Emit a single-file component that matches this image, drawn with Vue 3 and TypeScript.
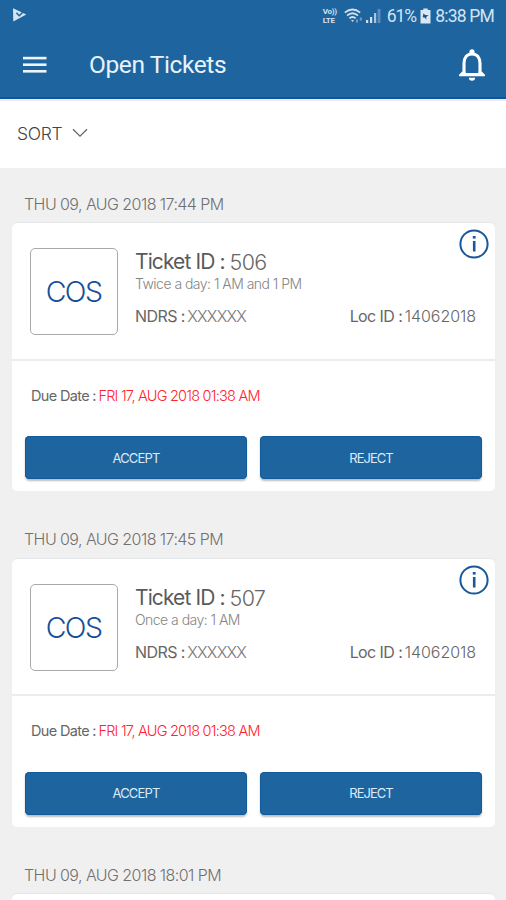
<script setup lang="ts">
interface Ticket {
  id: string
  note: string
  due: string
}

interface Entry {
  created: string
  ticket?: Ticket
}

const entries: Entry[] = [
  {
    created: 'THU 09, AUG 2018 17:44 PM',
    ticket: { id: '506', note: 'Twice a day: 1 AM and 1 PM', due: 'FRI 17, AUG 2018 01:38 AM' },
  },
  {
    created: 'THU 09, AUG 2018 17:45 PM',
    ticket: { id: '507', note: 'Once a day: 1 AM', due: 'FRI 17, AUG 2018 01:38 AM' },
  },
  { created: 'THU 09, AUG 2018 18:01 PM' },
]
</script>

<template>
  <div class="screen">
    <header class="top">
      <div class="status">
        <svg class="play" width="15" height="16" viewBox="0 0 15 16">
          <path d="M1 1.2 L14.3 7.4 L1.3 14.6 Z" fill="#d3e4f3" />
          <path d="M4.4 5.8 L7.2 8.8 L13 3.2" fill="none" stroke="#1e659f" stroke-width="1.5" />
        </svg>
        <div class="status-right">
          <span class="volte"><span>Vo))</span><span>LTE</span></span>
          <svg class="wifi" width="21" height="17" viewBox="0 0 21 17" fill="none" stroke="#cfe0f0" stroke-width="1.8">
            <path d="M0.8 4.6 Q8.5 -1.5 16.2 4.6" />
            <path d="M3 7.6 Q8.5 3 14 7.6" />
            <path d="M5.4 10.4 Q8.5 7.6 11.6 10.4" />
            <path d="M7 12 L8.5 14 L10 12 Z" fill="#cfe0f0" stroke="none" />
            <path d="M13 11.5 v3 M16.8 9.5 v3" stroke="#6f9dc8" stroke-width="2" />
          </svg>
          <svg class="signal" width="15" height="16" viewBox="0 0 15 16">
            <rect x="0" y="12" width="2.2" height="3" fill="#cfe0f0" />
            <rect x="4" y="9" width="2.2" height="6" fill="#cfe0f0" />
            <rect x="8" y="5" width="2.2" height="10" fill="#a9c6e0" />
            <rect x="11.6" y="1" width="2.8" height="14" fill="#5c8fbe" />
          </svg>
          <span class="pct">61%</span>
          <svg class="battery" width="11" height="16" viewBox="0 0 11 16">
            <path d="M3.3 0.5 H7.7 V2 H10.5 V15.5 H0.5 V2 H3.3 Z" fill="#d9e7f4" />
            <path d="M3.6 5.2 L5 7 L8.6 7.2 L6.2 9 L6.4 11.5 L4.6 9.6 L2.6 9.2 Z" fill="#1d4f7c" />
          </svg>
          <span class="clock">8:38 PM</span>
        </div>
      </div>
      <div class="bar">
        <svg class="menu" width="24" height="18" viewBox="0 0 24 18" fill="#eef5fc">
          <rect x="0" y="0.8" width="23.5" height="2.6" />
          <rect x="0" y="7.4" width="23.5" height="2.6" />
          <rect x="0" y="14" width="23.5" height="2.6" />
        </svg>
        <h1>Open Tickets</h1>
        <svg class="bell" width="28" height="32" viewBox="0 0 28 32">
          <path d="M6 25 V14.5 C6 8.6 9 5 14 5 C19 5 22 8.6 22 14.5 V25" fill="none" stroke="#fff" stroke-width="3.1" />
          <path d="M11.4 5 V2.9 A2.6 2.6 0 0 1 16.6 2.9 V5 Z" fill="#fff" />
          <path d="M1 27.2 V25.7 L4.5 22.2 H7.5 V24 H20.5 V22.2 H23.5 L27 25.7 V27.2 Z" fill="#fff" />
          <path d="M10.9 28.7 H17.1 A3.1 3 0 0 1 10.9 28.7 Z" fill="#fff" />
        </svg>
      </div>
    </header>

    <div class="sort">
      <span>SORT</span>
      <svg width="16" height="10" viewBox="0 0 16 10">
        <path d="M1 1.3 L8 8.2 L15 1.3" fill="none" stroke="#666" stroke-width="1.3" />
      </svg>
    </div>

    <main>
      <section v-for="e in entries" :key="e.created" class="group">
        <div class="created">{{ e.created }}</div>
        <article class="card">
          <template v-if="e.ticket">
            <div class="summary">
              <div class="tag">COS</div>
              <div class="details">
                <div class="title"><b>Ticket ID :</b><span>{{ e.ticket.id }}</span></div>
                <div class="note">{{ e.ticket.note }}</div>
                <div class="meta">
                  <div class="pair"><b>NDRS :</b><span class="ndrs">XXXXXX</span></div>
                  <div class="pair"><b>Loc ID :</b><span class="loc">14062018</span></div>
                </div>
              </div>
              <svg class="info" width="30" height="30" viewBox="0 0 30 30">
                <circle cx="15" cy="15" r="13.6" fill="none" stroke="#19569a" stroke-width="2" />
                <rect x="13.8" y="7" width="2.8" height="2.6" fill="#19569a" />
                <rect x="13.9" y="12" width="2.6" height="10.5" fill="#19569a" />
              </svg>
            </div>
            <div class="due"><b>Due Date :</b><span>{{ e.ticket.due }}</span></div>
            <div class="actions">
              <button type="button">ACCEPT</button>
              <button type="button" class="reject">REJECT</button>
            </div>
          </template>
        </article>
      </section>
    </main>
  </div>
</template>

<style>
body { overflow: hidden; }
</style>

<style scoped>
.screen {
  height: 900px;
  overflow: hidden;
  background: #f0f0f0;
  font-family: Inter, "Liberation Sans", sans-serif;
  font-weight: 300;
  color: #666;
}
svg { display: block; flex: none; }
b { font-weight: 400; }
.top {
  height: 99px;
  box-sizing: border-box;
  background: #1e659f;
  border-bottom: 2px solid #0c559b;
  font-family: Roboto, sans-serif;
  font-weight: 400;
}
.status {
  height: 32px;
  display: flex;
  justify-content: space-between;
  padding: 0 12px;
}
.play { margin-top: 7px; }
.status-right {
  display: flex;
  align-items: center;
  color: #d3e3f2;
  font-size: 17.5px;
  white-space: nowrap;
}
.volte {
  display: flex;
  flex-direction: column;
  width: 15px;
  font-size: 8px;
  line-height: 9px;
  font-weight: 700;
  letter-spacing: -0.3px;
}
.wifi { margin-left: 6px; }
.signal { margin-left: 1px; }
.pct { margin-left: 6px; letter-spacing: -1px; }
.battery { margin-left: 4px; }
.clock { margin-left: 4px; letter-spacing: -0.8px; }
.bar {
  height: 65px;
  display: flex;
  align-items: center;
  padding: 0 20px 0 23px;
}
h1 {
  flex: 1;
  margin: 0 0 0 42px;
  font-size: 24.5px;
  line-height: 30px;
  font-weight: 400;
  letter-spacing: -0.4px;
  color: #e9f2fb;
}
.sort {
  height: 68.5px;
  box-sizing: border-box;
  display: flex;
  align-items: center;
  gap: 9.5px;
  padding: 0 17px 2px;
  border-top: 2px solid #efe9ec;
  background: #fff;
  font-size: 17.5px;
  font-weight: 350;
  letter-spacing: -0.3px;
  color: #444;
}
.group { height: 335.6px; padding: 0 11px 0 12px; }
.created {
  height: 55.5px;
  box-sizing: border-box;
  padding: 26px 0 0 12px;
  font-size: 16px;
  line-height: 20px;
  letter-spacing: -0.56px;
  color: #707070;
}
.card {
  height: 268px;
  background: #fff;
  border-radius: 5px;
  box-shadow: 0 -1px 1px #e3e6e6;
}
.summary {
  position: relative;
  height: 137.5px;
  box-sizing: border-box;
  display: flex;
  padding: 25px 19px 0 18px;
  border-bottom: 2px solid #ececec;
}
.tag {
  width: 88px;
  height: 87px;
  box-sizing: border-box;
  border: 1px solid #aaa;
  border-radius: 5px;
  font-size: 28.5px;
  line-height: 86px;
  text-align: center;
  letter-spacing: -1.6px;
  text-indent: -1px;
  color: #174f97;
}
.details { flex: 1; margin-left: 17px; }
.title, .meta, .pair, .due { display: flex; }
.title {
  gap: 5px;
  font-size: 21.5px;
  line-height: 28px;
  letter-spacing: -0.7px;
}
.title b { font-size: 21px; letter-spacing: -0.9px; color: #5a5a5a; }
.note {
  font-size: 14px;
  line-height: 16px;
  letter-spacing: -0.53px;
  color: #858585;
}
.meta {
  justify-content: space-between;
  margin-top: 13px;
  font-size: 16px;
  line-height: 22px;
}
.pair { gap: 2.5px; }
.pair b { letter-spacing: -0.58px; }
.ndrs { letter-spacing: -0.8px; color: #777; }
.loc { letter-spacing: -0.05px; }
.info { position: absolute; top: 6px; right: 6px; }
.due {
  height: 75.5px;
  box-sizing: border-box;
  gap: 2.5px;
  padding: 24px 19px 0;
  font-size: 14.5px;
  line-height: 22px;
}
.due b { letter-spacing: -0.66px; }
.due span { letter-spacing: -0.77px; color: #ff2230; }
.actions { display: flex; gap: 13px; padding: 0 13px; }
button {
  flex: 1;
  height: 43px;
  padding: 0;
  border: 0;
  border-radius: 4.5px;
  background: #1e659f;
  box-shadow: inset 0 0 0 1px #125b9b, 0 2px 2px rgba(0, 0, 0, 0.26);
  font: 400 13px Inter, sans-serif;
  letter-spacing: -0.84px;
  color: #dcebf8;
}
.reject { letter-spacing: -1px; }
</style>
